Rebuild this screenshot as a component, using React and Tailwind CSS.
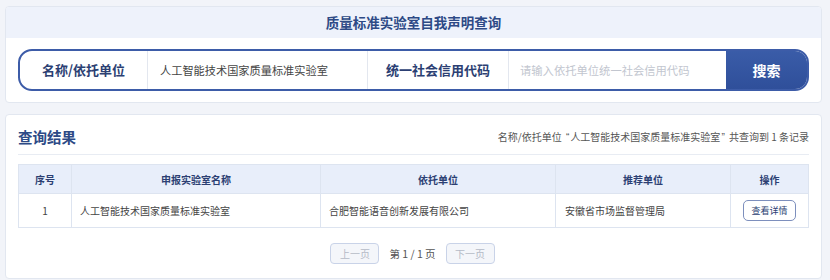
import React from "react";

const font = { fontFamily: '"Noto Sans CJK SC", "Noto Sans", sans-serif' };
const latin = { fontFamily: '"Liberation Sans", sans-serif' };

export default function App() {
  return (
    <div className="w-[830px] h-[280px] bg-[#f2f4f9] pt-[6px] pl-[5px] overflow-hidden" style={font}>
      {/* Top card */}
      <div className="w-[817px] h-[97px] bg-white border border-[#e2e7f0] rounded-[4px] overflow-hidden flex flex-col">
        <div className="h-[31px] bg-[#eef2fb] flex items-center justify-center text-[13.5px] font-bold text-[#2d4a86] leading-none">
          质量标准实验室自我声明查询
        </div>
        <div className="flex-1 px-[12px] flex items-center">
          <div className="flex w-full h-[42px] border-2 border-[#3d5ca8] rounded-[14px] overflow-hidden">
            <div className="w-[128px] flex items-center justify-center text-[13px] font-bold text-[#2c3f73] border-r border-[#e3e7ef]">
              名称/依托单位
            </div>
            <div className="w-[219px] flex items-center pl-[12px] text-[11.2px] text-[#444]">
              人工智能技术国家质量标准实验室
            </div>
            <div className="w-[142px] flex items-center justify-center text-[13px] font-bold text-[#2c3f73] border-l border-r border-[#e3e7ef]">
              统一社会信用代码
            </div>
            <div className="w-[217px] flex items-center pl-[11px] text-[11.3px] text-[#c2c6cf]">
              请输入依托单位统一社会信用代码
            </div>
            <div className="flex-1 flex items-center justify-center bg-gradient-to-b from-[#3a5ca8] to-[#2f4f9a] text-white text-[14px] font-bold">
              搜索
            </div>
          </div>
        </div>
      </div>

      {/* Results card */}
      <div className="mt-[11px] w-[817px] h-[165px] bg-white border border-[#e2e7f0] rounded-[4px] px-[12px]">
        <div className="h-[40px] pt-[6px] flex items-center justify-between border-b border-[#e8ecf3]">
          <div className="text-[14.5px] font-bold text-[#2d4a86] leading-none">查询结果</div>
          <div className="text-[10px] text-[#555] leading-none">
            名称/依托单位 <span className="ml-[2px] mr-[1px]" style={latin}>“</span>人工智能技术国家质量标准实验室<span className="ml-[1px] mr-[2px]" style={latin}>”</span> 共查询到 1 条记录
          </div>
        </div>
        <div className="mt-[9px] border border-[#dde4f0]">
          <div className="flex h-[29px] bg-[#e8eefa] text-[10px] font-bold text-[#2c3f73] border-b border-[#dde4f0]">
            <div className="w-[53px] flex items-center justify-center border-r border-[#dde4f0]">序号</div>
            <div className="w-[249px] flex items-center justify-center border-r border-[#dde4f0]">申报实验室名称</div>
            <div className="w-[235px] flex items-center justify-center border-r border-[#dde4f0]">依托单位</div>
            <div className="w-[175px] flex items-center justify-center border-r border-[#dde4f0]">推荐单位</div>
            <div className="flex-1 flex items-center justify-center">操作</div>
          </div>
          <div className="flex h-[33px] text-[10px] text-[#444]">
            <div className="w-[53px] flex items-center justify-center border-r border-[#dde4f0]">1</div>
            <div className="w-[249px] flex items-center pl-[8px] border-r border-[#dde4f0]">人工智能技术国家质量标准实验室</div>
            <div className="w-[235px] flex items-center pl-[8px] border-r border-[#dde4f0]">合肥智能语音创新发展有限公司</div>
            <div className="w-[175px] flex items-center pl-[9px] border-r border-[#dde4f0]">安徽省市场监督管理局</div>
            <div className="flex-1 flex items-center justify-center">
              <div className="w-[53px] h-[21px] border border-[#7d8fbd] rounded-[5px] flex items-center justify-center text-[9px] text-[#2c3f73]">
                查看详情
              </div>
            </div>
          </div>
        </div>
        <div className="mt-[15px] flex items-center justify-center gap-[10px] pr-[2px]">
          <div className="w-[49px] h-[21px] border border-[#c9d3e8] bg-[#f4f6fa] rounded-[4px] flex items-center justify-center text-[10px] text-[#b4bac6]">
            上一页
          </div>
          <div className="text-[10.5px] text-[#555]">第 1 / 1 页</div>
          <div className="w-[49px] h-[21px] border border-[#c9d3e8] bg-[#f4f6fa] rounded-[4px] flex items-center justify-center text-[10px] text-[#b4bac6]">
            下一页
          </div>
        </div>
      </div>
    </div>
  );
}
